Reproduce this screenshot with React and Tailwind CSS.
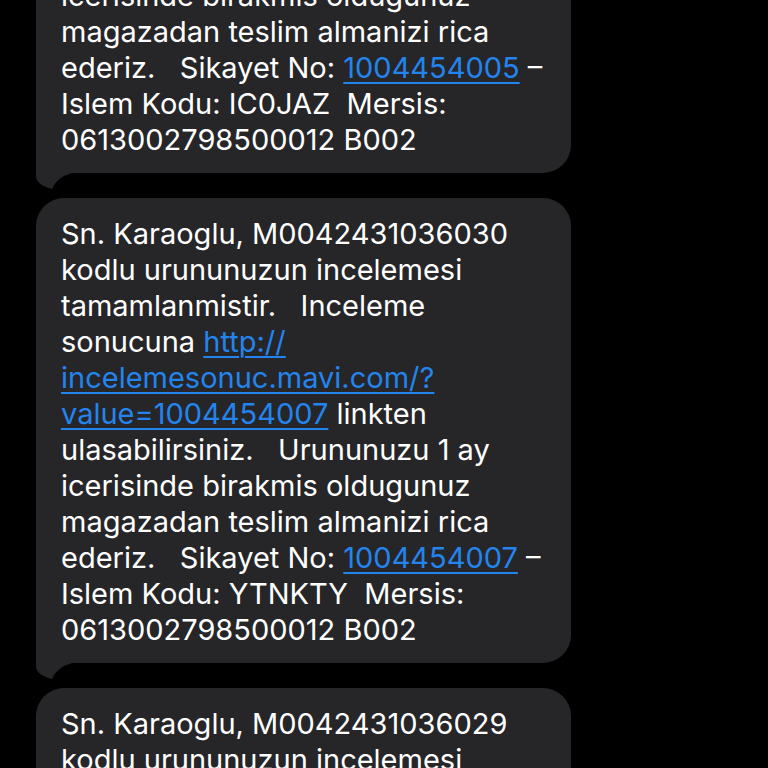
import React from 'react'

const link = (text) => ({ text, link: true });

const buildMessage = (code, sikayet, islem) => [
    [`Sn. Karaoglu, ${code}`],
    ["kodlu urununuzun incelemesi"],
    ["tamamlanmistir.   Inceleme"],
    ["sonucuna ", link("http://")],
    [link("incelemesonuc.mavi.com/?")],
    [link(`value=${sikayet}`), " linkten"],
    ["ulasabilirsiniz.   Urununuzu 1 ay"],
    ["icerisinde birakmis oldugunuz"],
    ["magazadan teslim almanizi rica"],
    ["ederiz.   Sikayet No: ", link(sikayet), " –"],
    [`Islem Kodu: ${islem}  Mersis:`],
    ["0613002798500012 B002"],
];

const messages = [
    buildMessage("M0042431036031", "1004454005", "IC0JAZ"),
    buildMessage("M0042431036030", "1004454007", "YTNKTY"),
    buildMessage("M0042431036029", "1004454006", "K7RMPA"),
];

// little tail under the bottom-left corner of a received bubble
const Tail = () => (
    <svg className="absolute left-0 bottom-[-16px]" width="40" height="46" viewBox="0 0 40 46">
        <path d="M0 0 L0 34 Q1 42 16 46 Q21 34 36 30 L36 0 Z" fill="#262628" />
    </svg>
);

const Bubble = ({ lines }) => (
    <div className="relative w-[535px]">
        <div className="relative z-10 bg-[#262628] rounded-[28px] pl-[25px] pr-4 pt-[18px] pb-[15px]">
            {lines.map((segments, i) => (
                <div key={i} className="whitespace-pre leading-[36px]">
                    {segments.map((seg, j) =>
                        typeof seg === "string" ? (
                            <span key={j}>{seg}</span>
                        ) : (
                            <span key={j} className="text-[#2484ee] underline decoration-[1.5px] underline-offset-[4px]">{seg.text}</span>
                        )
                    )}
                </div>
            ))}
        </div>
        <Tail />
    </div>
);

export default function App() {
    return (
        <div className="w-[768px] h-[768px] overflow-hidden bg-black text-white text-[29px] font-['Inter',sans-serif]">
            <div className="-mt-[292px] pl-9 flex flex-col gap-[25px]">
                {messages.map((lines, i) => (
                    <Bubble key={i} lines={lines} />
                ))}
            </div>
        </div>
    )
}
